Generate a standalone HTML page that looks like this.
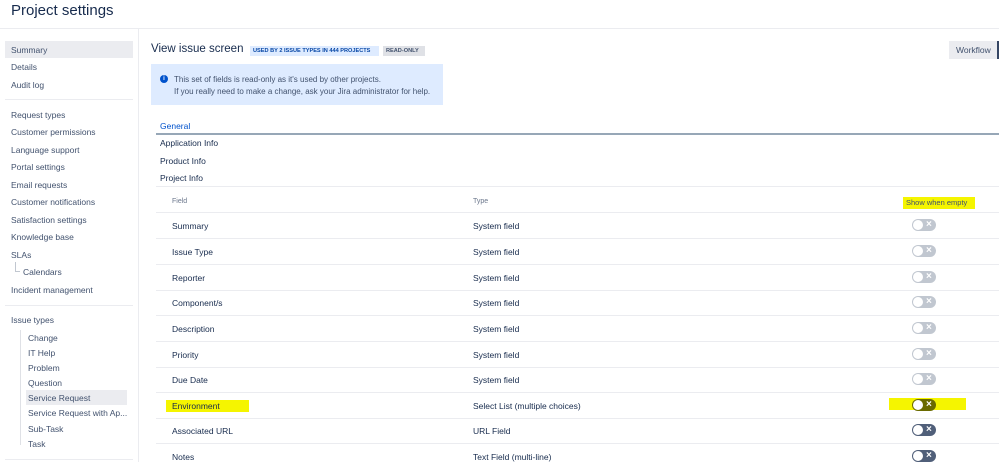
<!DOCTYPE html>
<html><head><style>
*{margin:0;padding:0;box-sizing:border-box}
body{width:999px;height:462px;overflow:hidden;background:#fff;font-family:"Liberation Sans",sans-serif;color:#172b4d;position:relative}
.a{position:absolute;white-space:nowrap}
.sb{font-size:8.5px;color:#42526e}
.hl{background:#f5f500}
.tg{position:absolute;width:24px;height:12px;border-radius:6px}
.tg::before{content:"";position:absolute;left:1px;top:1px;width:10px;height:10px;border-radius:50%;background:#fff}
.tg::after{content:"×";position:absolute;left:14px;top:0;line-height:12px;font-size:10px;font-weight:bold;color:#fff}
.line{position:absolute;height:1px;background:#ebecf0}
</style></head><body>
<div class="a" style="left:11px;top:2px;font-size:15px;color:#172b4d">Project settings</div>
<div class="line" style="left:0;top:28px;width:999px;background:#ebecf0"></div>
<div style="position:absolute;left:138px;top:29px;width:1px;height:433px;background:#ebecf0"></div>
<div style="position:absolute;left:5px;top:41px;width:128px;height:17px;background:#ebecf0"></div>
<div class="a sb" style="left:11px;top:45px">Summary</div>
<div class="a sb" style="left:11px;top:62px">Details</div>
<div class="a sb" style="left:11px;top:80px">Audit log</div>
<div class="line" style="left:5px;top:99px;width:128px"></div>
<div class="a sb" style="left:11px;top:110px">Request types</div>
<div class="a sb" style="left:11px;top:127px">Customer permissions</div>
<div class="a sb" style="left:11px;top:145px">Language support</div>
<div class="a sb" style="left:11px;top:162px">Portal settings</div>
<div class="a sb" style="left:11px;top:180px">Email requests</div>
<div class="a sb" style="left:11px;top:197px">Customer notifications</div>
<div class="a sb" style="left:11px;top:215px">Satisfaction settings</div>
<div class="a sb" style="left:11px;top:232px">Knowledge base</div>
<div class="a sb" style="left:11px;top:250px">SLAs</div>
<div style="position:absolute;left:15px;top:262px;width:5px;height:10px;border-left:1px solid #c1c7d0;border-bottom:1px solid #c1c7d0"></div>
<div class="a sb" style="left:23px;top:267px">Calendars</div>
<div class="a sb" style="left:11px;top:285px">Incident management</div>
<div class="line" style="left:5px;top:305px;width:128px"></div>
<div class="a sb" style="left:11px;top:315px">Issue types</div>
<div style="position:absolute;left:20px;top:330px;width:1px;height:115px;background:#dfe1e6"></div>
<div style="position:absolute;left:26px;top:390px;width:101px;height:15px;background:#ebecf0"></div>
<div class="a sb" style="left:28px;top:333px">Change</div>
<div class="a sb" style="left:28px;top:348px">IT Help</div>
<div class="a sb" style="left:28px;top:363px">Problem</div>
<div class="a sb" style="left:28px;top:378px">Question</div>
<div class="a sb" style="left:28px;top:393px">Service Request</div>
<div class="a sb" style="left:28px;top:408px">Service Request with Ap...</div>
<div class="a sb" style="left:28px;top:424px">Sub-Task</div>
<div class="a sb" style="left:28px;top:439px">Task</div>
<div class="line" style="left:5px;top:459px;width:128px"></div>

<div class="a" style="left:151px;top:43px;font-size:11.5px">View issue screen</div>
<div class="a" style="left:250px;top:46px;height:10px;width:129px;padding:0 3px;background:#deebff;color:#0747a6;font-size:5.6px;font-weight:bold;line-height:10px;overflow:hidden">USED BY 2 ISSUE TYPES IN 444 PROJECTS</div>
<div class="a" style="left:383px;top:46px;height:10px;width:42px;padding:0 3px;background:#dfe1e6;color:#42526e;font-size:5.6px;font-weight:bold;line-height:10px">READ-ONLY</div>
<div style="position:absolute;left:949px;top:41px;width:48px;height:18px;background:#ebecf0"></div>
<div class="a" style="left:956px;top:45px;font-size:8.5px;color:#42526e">Workflow</div>
<div style="position:absolute;left:997px;top:41px;width:2px;height:18px;background:#344563"></div>
<div style="position:absolute;left:151px;top:64px;width:292px;height:41px;background:#deebff"></div>
<div style="position:absolute;left:160px;top:75px;width:8px;height:8px;border-radius:50%;background:#0052cc;color:#fff;font-size:6px;font-weight:bold;text-align:center;line-height:8px">i</div>
<div class="a" style="left:174px;top:74px;font-size:8px;color:#42526e;line-height:11.5px">This set of fields is read-only as it's used by other projects.<br>If you really need to make a change, ask your Jira administrator for help.</div>
<div class="a" style="left:160px;top:121px;font-size:8.5px;color:#0052cc">General</div>
<div style="position:absolute;left:156px;top:133px;width:843px;height:2px;background:#97a7b7"></div>
<div class="a" style="left:160px;top:138px;font-size:8.5px">Application Info</div>
<div class="a" style="left:160px;top:156px;font-size:8.5px">Product Info</div>
<div class="a" style="left:160px;top:173px;font-size:8.5px">Project Info</div>
<div class="line" style="left:156px;top:186px;width:843px"></div>
<div class="a" style="left:172px;top:198px;font-size:7px;color:#6b778c">Field</div>
<div class="a" style="left:473px;top:198px;font-size:7px;color:#6b778c">Type</div>
<div class="a hl" style="left:903px;top:197px;width:72px;height:12px;font-size:7.5px;color:#42526e;padding-left:3px;line-height:12px">Show when empty</div>
<div class="line" style="left:156px;top:212px;width:843px"></div>

<div class="a sb" style="left:172px;top:221px;color:#172b4d">Summary</div><div class="a sb" style="left:473px;top:221px;color:#172b4d">System field</div><div class="tg" style="left:912px;top:219px;background:#c1c7d0"></div><div class="line" style="left:156px;top:238px;width:843px"></div>
<div class="a sb" style="left:172px;top:247px;color:#172b4d">Issue Type</div><div class="a sb" style="left:473px;top:247px;color:#172b4d">System field</div><div class="tg" style="left:912px;top:245px;background:#c1c7d0"></div><div class="line" style="left:156px;top:264px;width:843px"></div>
<div class="a sb" style="left:172px;top:273px;color:#172b4d">Reporter</div><div class="a sb" style="left:473px;top:273px;color:#172b4d">System field</div><div class="tg" style="left:912px;top:271px;background:#c1c7d0"></div><div class="line" style="left:156px;top:290px;width:843px"></div>
<div class="a sb" style="left:172px;top:298px;color:#172b4d">Component/s</div><div class="a sb" style="left:473px;top:298px;color:#172b4d">System field</div><div class="tg" style="left:912px;top:296px;background:#c1c7d0"></div><div class="line" style="left:156px;top:315px;width:843px"></div>
<div class="a sb" style="left:172px;top:324px;color:#172b4d">Description</div><div class="a sb" style="left:473px;top:324px;color:#172b4d">System field</div><div class="tg" style="left:912px;top:322px;background:#c1c7d0"></div><div class="line" style="left:156px;top:341px;width:843px"></div>
<div class="a sb" style="left:172px;top:350px;color:#172b4d">Priority</div><div class="a sb" style="left:473px;top:350px;color:#172b4d">System field</div><div class="tg" style="left:912px;top:348px;background:#c1c7d0"></div><div class="line" style="left:156px;top:367px;width:843px"></div>
<div class="a sb" style="left:172px;top:375px;color:#172b4d">Due Date</div><div class="a sb" style="left:473px;top:375px;color:#172b4d">System field</div><div class="tg" style="left:912px;top:373px;background:#c1c7d0"></div><div class="line" style="left:156px;top:392px;width:843px"></div>
<div class="a hl" style="left:166px;top:400px;width:83px;height:12px"></div>
<div class="a sb" style="left:172px;top:401px;color:#172b4d">Environment</div><div class="a sb" style="left:473px;top:401px;color:#172b4d">Select List (multiple choices)</div>
<div class="a hl" style="left:889px;top:398px;width:77px;height:12px"></div>
<div class="tg" style="left:912px;top:399px;background:#6b6b00"></div><div class="line" style="left:156px;top:418px;width:843px"></div>
<div class="a sb" style="left:172px;top:426px;color:#172b4d">Associated URL</div><div class="a sb" style="left:473px;top:426px;color:#172b4d">URL Field</div><div class="tg" style="left:912px;top:424px;background:#505f79"></div><div class="line" style="left:156px;top:443px;width:843px"></div>
<div class="a sb" style="left:172px;top:452px;color:#172b4d">Notes</div><div class="a sb" style="left:473px;top:452px;color:#172b4d">Text Field (multi-line)</div><div class="tg" style="left:912px;top:450px;background:#505f79"></div>
</body></html>
